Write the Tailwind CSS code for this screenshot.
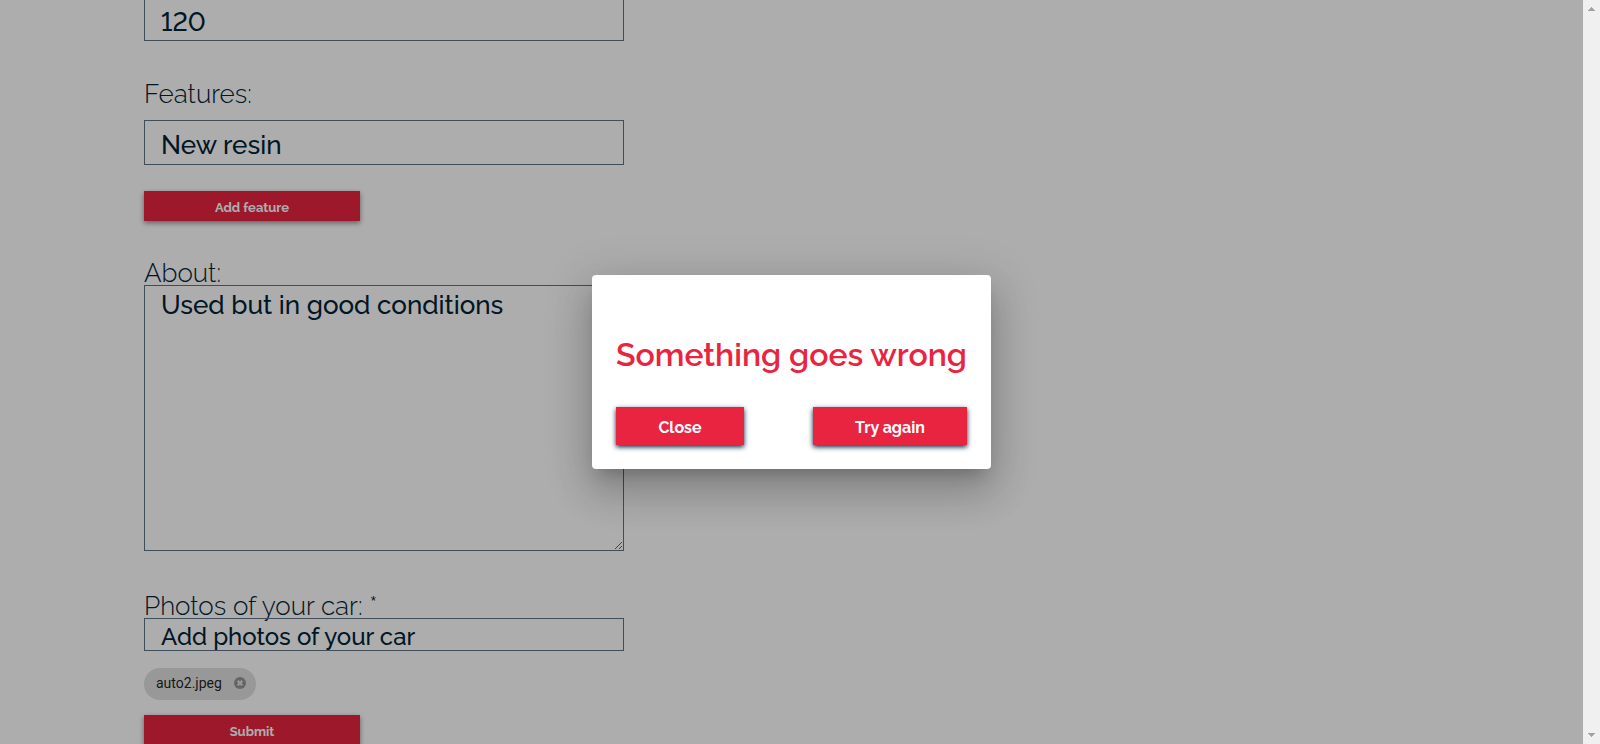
<!DOCTYPE html>
<html lang="en">
<head>
<meta charset="utf-8">
<title>Add car</title>
<script src="https://cdn.jsdelivr.net/npm/@tailwindcss/browser@4"></script>
</head>
<body class="flex h-screen overflow-hidden bg-white font-[Raleway,Lato,sans-serif] text-[#002236]">
<main class="relative min-w-0 flex-1 overflow-hidden">
  <form class="-mt-1 flex flex-col items-start px-36">
    <input aria-label="Price" value="120" class="h-[45px] w-full max-w-[480px] border border-[#5d7483] px-4 pt-[6px] text-[26px] font-medium lining-nums">
    <label for="features" class="mt-[39px] text-[26px] leading-7 font-light">Features:</label>
    <input id="features" value="New resin" class="mt-3 h-[45px] w-full max-w-[480px] border border-[#5d7483] px-4 pt-1 text-[26px] font-medium">
    <button type="button" class="mt-[26px] h-[30px] w-[216px] bg-[#e92440] pt-1 text-[13px] font-bold text-white shadow-[0_2px_5px_#00000073]">Add feature</button>
    <label for="about" class="mt-[38px] pt-[2px] text-[26px] leading-6 font-light">About:</label>
    <textarea id="about" class="h-[266px] w-full max-w-[480px] resize border border-[#5d7483] px-4 pt-[3px] text-[26px] leading-8 font-medium">Used but in good conditions</textarea>
    <label for="photos" class="mt-[41px] pt-[2px] text-[26px] leading-6 font-light">Photos of your car: *</label>
    <button id="photos" type="button" class="h-[33px] w-full max-w-[480px] border border-[#5d7483] px-4 pt-1 text-left text-[24px] leading-7 font-medium">Add photos of your car</button>
    <div class="mt-[17px] flex h-8 items-center gap-[11px] rounded-full bg-[#e0e0e0] pr-[9px] pb-[2px] pl-3 font-[Roboto,sans-serif] text-[14px] text-black/87">
      <span>auto2.jpeg</span>
      <button type="button" aria-label="Remove auto2.jpeg" class="size-[14px]">
        <svg viewBox="0 0 512 512" class="size-[14px]" aria-hidden="true"><circle cx="256" cy="256" r="220" fill="#959595"/><path d="M172 172L340 340M340 172L172 340" stroke="#e0e0e0" stroke-width="84"/></svg>
      </button>
    </div>
    <button type="submit" class="mt-[15px] h-[30px] w-[216px] bg-[#e92440] pt-1 text-[13px] font-bold text-white shadow-[0_2px_5px_#00000073]">Submit</button>
  </form>
  <div class="absolute inset-0 flex items-center justify-center bg-black/32">
    <div role="dialog" aria-labelledby="dialog-title" class="rounded-[4px] bg-white px-6 pt-[60px] pb-6 shadow-[0_11px_15px_-7px_rgba(0,0,0,0.2),0_24px_38px_3px_rgba(0,0,0,0.14),0_9px_46px_8px_rgba(0,0,0,0.12)]">
      <h2 id="dialog-title" class="w-[351px] text-center text-[32px] leading-10 font-semibold whitespace-nowrap text-[#e92440]">Something goes wrong</h2>
      <div class="mt-8 flex justify-between">
        <button type="button" class="h-[38px] w-32 bg-[#e92440] pt-1 text-[16px] font-bold text-white shadow-[0_2px_5px_#00263f]">Close</button>
        <button type="button" class="h-[38px] w-[154px] bg-[#e92440] pt-1 text-[16px] font-bold text-white shadow-[0_2px_5px_#00263f]">Try again</button>
      </div>
    </div>
  </div>
</main>
<div class="flex w-[17px] shrink-0 flex-col items-center justify-between bg-[#f0f0f0] py-[7px]" aria-hidden="true">
  <svg class="h-1 w-[7px]" viewBox="0 0 7 4" shape-rendering="crispEdges" fill="#a3a3a3"><path d="M3 0h1v1h1v1h1v1h1v1H0V3h1V2h1V1h1z"/></svg>
  <svg class="h-1 w-[7px]" viewBox="0 0 7 4" shape-rendering="crispEdges" fill="#a3a3a3"><path d="M0 0h7v1H6v1H5v1H4v1H3V3H2V2H1V1H0z"/></svg>
</div>
</body>
</html>
